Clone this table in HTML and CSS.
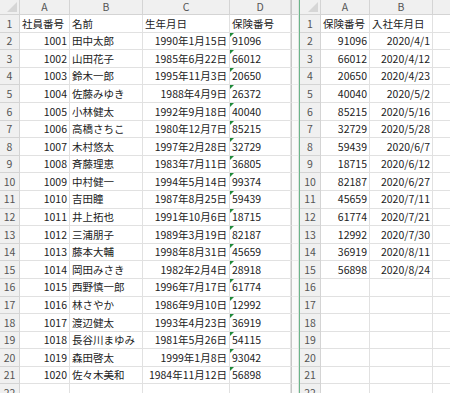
FILE: index.html
```html
<!DOCTYPE html>
<html lang="ja">
<head>
<meta charset="utf-8">
<link rel="stylesheet" href="styles.css">
</head>
<body>
<div class="screen">
  <div class="sheet sheet-left">
    <div class="hdr corner"></div><div class="hdr col">A</div><div class="hdr col">B</div><div class="hdr col">C</div><div class="hdr col">D</div><div class="hdr col edge"></div>
    <div class="hdr row">1</div><div class="c">社員番号</div><div class="c">名前</div><div class="c">生年月日</div><div class="c">保険番号</div><div class="c edge"></div>
    <div class="hdr row">2</div><div class="c r">1001</div><div class="c">田中太郎</div><div class="c r">1990年1月15日</div><div class="c t">91096</div><div class="c edge"></div>
    <div class="hdr row">3</div><div class="c r">1002</div><div class="c">山田花子</div><div class="c r">1985年6月22日</div><div class="c t">66012</div><div class="c edge"></div>
    <div class="hdr row">4</div><div class="c r">1003</div><div class="c">鈴木一郎</div><div class="c r">1995年11月3日</div><div class="c t">20650</div><div class="c edge"></div>
    <div class="hdr row">5</div><div class="c r">1004</div><div class="c">佐藤みゆき</div><div class="c r">1988年4月9日</div><div class="c t">26372</div><div class="c edge"></div>
    <div class="hdr row">6</div><div class="c r">1005</div><div class="c">小林健太</div><div class="c r">1992年9月18日</div><div class="c t">40040</div><div class="c edge"></div>
    <div class="hdr row">7</div><div class="c r">1006</div><div class="c">高橋さちこ</div><div class="c r">1980年12月7日</div><div class="c t">85215</div><div class="c edge"></div>
    <div class="hdr row">8</div><div class="c r">1007</div><div class="c">木村悠太</div><div class="c r">1997年2月28日</div><div class="c t">32729</div><div class="c edge"></div>
    <div class="hdr row">9</div><div class="c r">1008</div><div class="c">斉藤理恵</div><div class="c r">1983年7月11日</div><div class="c t">36805</div><div class="c edge"></div>
    <div class="hdr row">10</div><div class="c r">1009</div><div class="c">中村健一</div><div class="c r">1994年5月14日</div><div class="c t">99374</div><div class="c edge"></div>
    <div class="hdr row">11</div><div class="c r">1010</div><div class="c">吉田瞳</div><div class="c r">1987年8月25日</div><div class="c t">59439</div><div class="c edge"></div>
    <div class="hdr row">12</div><div class="c r">1011</div><div class="c">井上拓也</div><div class="c r">1991年10月6日</div><div class="c t">18715</div><div class="c edge"></div>
    <div class="hdr row">13</div><div class="c r">1012</div><div class="c">三浦朋子</div><div class="c r">1989年3月19日</div><div class="c t">82187</div><div class="c edge"></div>
    <div class="hdr row">14</div><div class="c r">1013</div><div class="c">藤本大輔</div><div class="c r">1998年8月31日</div><div class="c t">45659</div><div class="c edge"></div>
    <div class="hdr row">15</div><div class="c r">1014</div><div class="c">岡田みさき</div><div class="c r">1982年2月4日</div><div class="c t">28918</div><div class="c edge"></div>
    <div class="hdr row">16</div><div class="c r">1015</div><div class="c">西野慎一郎</div><div class="c r">1996年7月17日</div><div class="c t">61774</div><div class="c edge"></div>
    <div class="hdr row">17</div><div class="c r">1016</div><div class="c">林さやか</div><div class="c r">1986年9月10日</div><div class="c t">12992</div><div class="c edge"></div>
    <div class="hdr row">18</div><div class="c r">1017</div><div class="c">渡辺健太</div><div class="c r">1993年4月23日</div><div class="c t">36919</div><div class="c edge"></div>
    <div class="hdr row">19</div><div class="c r">1018</div><div class="c">長谷川まゆみ</div><div class="c r">1981年5月26日</div><div class="c t">54115</div><div class="c edge"></div>
    <div class="hdr row">20</div><div class="c r">1019</div><div class="c">森田啓太</div><div class="c r">1999年1月8日</div><div class="c t">93042</div><div class="c edge"></div>
    <div class="hdr row">21</div><div class="c r">1020</div><div class="c">佐々木美和</div><div class="c r">1984年11月12日</div><div class="c t">56898</div><div class="c edge"></div>
    <div class="hdr row">22</div><div class="c"></div><div class="c"></div><div class="c"></div><div class="c"></div><div class="c edge"></div>
  </div>
  <div class="divider"></div>
  <div class="sheet sheet-right">
    <div class="hdr corner"></div><div class="hdr col">A</div><div class="hdr col">B</div><div class="hdr col"></div>
    <div class="hdr row">1</div><div class="c">保険番号</div><div class="c">入社年月日</div><div class="c"></div>
    <div class="hdr row">2</div><div class="c r">91096</div><div class="c r">2020/4/1</div><div class="c"></div>
    <div class="hdr row">3</div><div class="c r">66012</div><div class="c r">2020/4/12</div><div class="c"></div>
    <div class="hdr row">4</div><div class="c r">20650</div><div class="c r">2020/4/23</div><div class="c"></div>
    <div class="hdr row">5</div><div class="c r">40040</div><div class="c r">2020/5/2</div><div class="c"></div>
    <div class="hdr row">6</div><div class="c r">85215</div><div class="c r">2020/5/16</div><div class="c"></div>
    <div class="hdr row">7</div><div class="c r">32729</div><div class="c r">2020/5/28</div><div class="c"></div>
    <div class="hdr row">8</div><div class="c r">59439</div><div class="c r">2020/6/7</div><div class="c"></div>
    <div class="hdr row">9</div><div class="c r">18715</div><div class="c r">2020/6/12</div><div class="c"></div>
    <div class="hdr row">10</div><div class="c r">82187</div><div class="c r">2020/6/27</div><div class="c"></div>
    <div class="hdr row">11</div><div class="c r">45659</div><div class="c r">2020/7/11</div><div class="c"></div>
    <div class="hdr row">12</div><div class="c r">61774</div><div class="c r">2020/7/21</div><div class="c"></div>
    <div class="hdr row">13</div><div class="c r">12992</div><div class="c r">2020/7/30</div><div class="c"></div>
    <div class="hdr row">14</div><div class="c r">36919</div><div class="c r">2020/8/11</div><div class="c"></div>
    <div class="hdr row">15</div><div class="c r">56898</div><div class="c r">2020/8/24</div><div class="c"></div>
    <div class="hdr row">16</div><div class="c"></div><div class="c"></div><div class="c"></div>
    <div class="hdr row">17</div><div class="c"></div><div class="c"></div><div class="c"></div>
    <div class="hdr row">18</div><div class="c"></div><div class="c"></div><div class="c"></div>
    <div class="hdr row">19</div><div class="c"></div><div class="c"></div><div class="c"></div>
    <div class="hdr row">20</div><div class="c"></div><div class="c"></div><div class="c"></div>
    <div class="hdr row">21</div><div class="c"></div><div class="c"></div><div class="c"></div>
    <div class="hdr row">22</div><div class="c"></div><div class="c"></div><div class="c"></div>
  </div>
</div>
</body>
</html>
```
FILE: styles.css
```css
html, body {
  margin: 0;
  padding: 0;
  background: #ffffff;
}
body {
  width: 450px;
  height: 393px;
  overflow: hidden;
  font-family: "Noto Sans CJK JP", "Noto Sans", sans-serif;
  font-size: 10.5px;
  color: #222222;
}
.screen {
  display: flex;
  height: 393px;
  overflow: hidden;
}
.sheet {
  display: grid;
  grid-template-rows: 15px;
  grid-auto-rows: 17.6px;
  align-content: start;
  overflow: hidden;
  height: 393px;
}
.sheet-left {
  width: 298px;
  grid-template-columns: 20px 50px 73px 87px 61px 7px;
}
.sheet-right {
  flex: 1;
  grid-template-columns: 21px 49px 63px 40px;
}
.divider {
  width: 2px;
  flex: none;
  background: #dfe3e0;
  border-right: 1px solid #6cb58a;
  box-sizing: border-box;
}
.c {
  box-sizing: border-box;
  border-right: 1px solid #e1e1e1;
  border-bottom: 1px solid #e1e1e1;
  display: flex;
  align-items: center;
  padding: 1px 2px 0 2px;
  white-space: nowrap;
  overflow: hidden;
  position: relative;
  line-height: 1;
}
.c.r {
  justify-content: flex-end;
}
.c.t::before {
  content: "";
  position: absolute;
  left: 0;
  top: 0;
  border-top: 4px solid #1f8a3a;
  border-right: 4px solid transparent;
}
.c.edge {
  background: #fafafa;
  border-left: 1px solid #c6c6c6;
  border-right: none;
  border-bottom-color: #ebebeb;
}
.hdr {
  box-sizing: border-box;
  background: #f0f0f0;
  color: #555555;
  border-right: 1px solid #d4d4d4;
  border-bottom: 1px solid #d4d4d4;
  display: flex;
  align-items: center;
  justify-content: center;
  line-height: 1;
  padding-top: 1px;
  position: relative;
}
.hdr.col.edge {
  border-right: none;
  border-left: 1px solid #c6c6c6;
}
.corner::after {
  content: "";
  position: absolute;
  right: 2px;
  bottom: 2px;
  border-bottom: 10px solid #d6d6d6;
  border-left: 10px solid transparent;
}
```
